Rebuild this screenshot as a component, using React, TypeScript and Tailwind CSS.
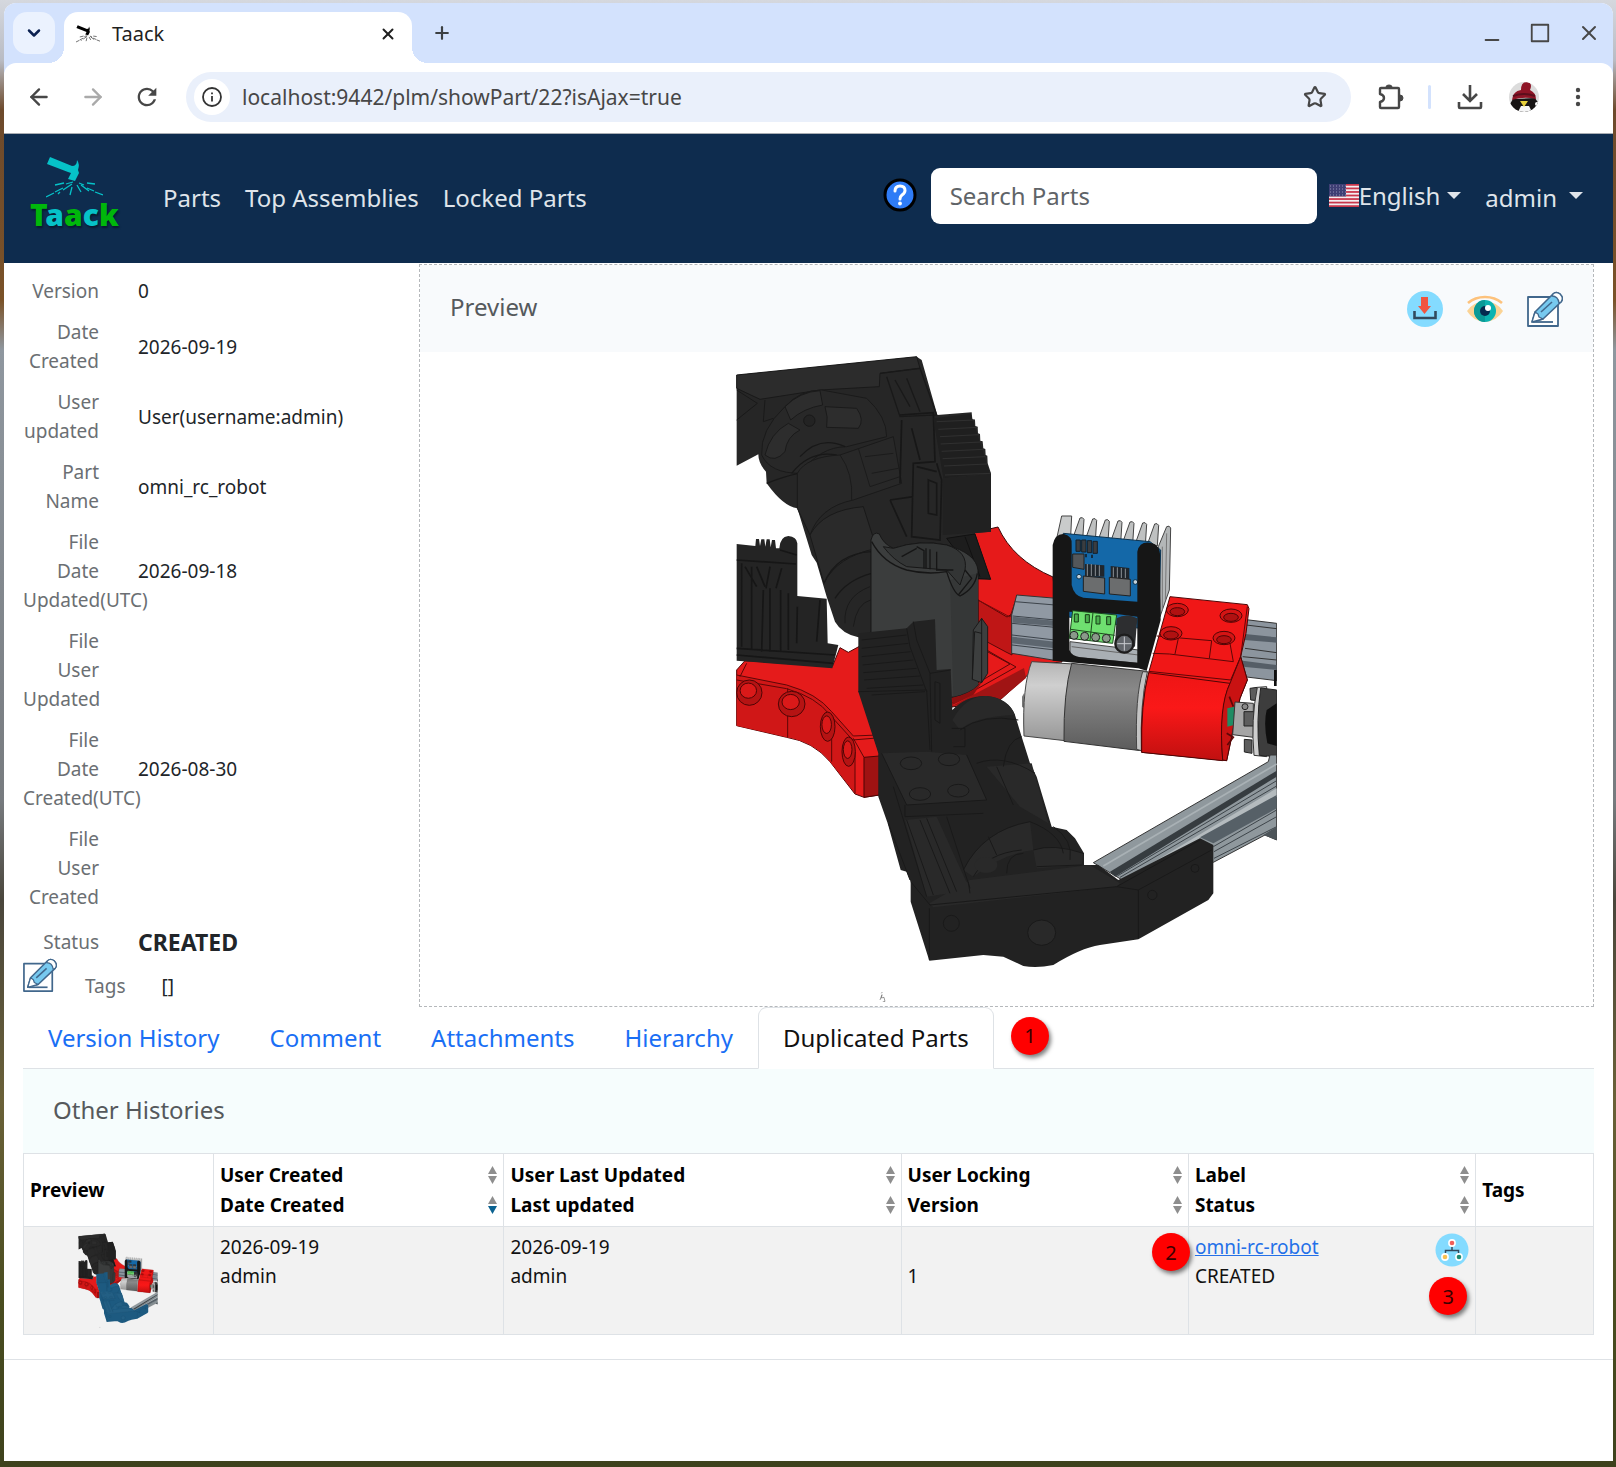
import React from 'react';
import {
  ArrowLeft,
  ArrowRight,
  ChevronDown,
  Minus,
  Plus,
  Square,
  Star,
  X,
} from 'lucide-react';
import { MdRefresh } from 'react-icons/md';

// ─── Data ───────────────────────────────────────────────────────────────────
const NAV_LINKS = ['Parts', 'Top Assemblies', 'Locked Parts'];

const FIELDS = [
  { label: 'Version', value: '0' },
  { label: 'Date Created', value: '2026-09-19' },
  { label: 'User updated', value: 'User(username:admin)' },
  { label: 'Part Name', value: 'omni_rc_robot' },
  { label: 'File Date Updated(UTC)', value: '2026-09-18' },
  { label: 'File User Updated', value: '' },
  { label: 'File Date Created(UTC)', value: '2026-08-30' },
  { label: 'File User Created', value: '' },
];

const TABS = ['Version History', 'Comment', 'Attachments', 'Hierarchy', 'Duplicated Parts'];

const COLUMNS = [
  { lines: ['User Created', 'Date Created'], sorted: 'Date Created' },
  { lines: ['User Last Updated', 'Last updated'] },
  { lines: ['User Locking', 'Version'] },
  { lines: ['Label', 'Status'] },
];

// ─── Icons ──────────────────────────────────────────────────────────────────
function HammerIcon({ color, className }: { color: string; className: string }) {
  return (
    <svg viewBox="0 0 57 42" className={className} aria-hidden="true">
      <path d="M4 0 L26 9 Q31 9 31 3 Q34 7 32 13 L33 16 L29 24 L22 22 L25 16 L22 15 L1 7Z" fill={color} />
      <path
        d="M0 40 L8 36 M9 35 L17 31 M17 33 L26 27 M57 38 L49 35 M48 34 L41 31 M43 34 L35 28 M9 28 L18 26 M20 27 L27 25 M49 27 L41 26 M38 28 L33 26 M24 38 L26 30 M35 35 L31 28 M14 35 L12 37"
        stroke={color}
        strokeWidth="1.300"
        fill="none"
      />
    </svg>
  );
}

function PuzzleIcon() {
  return (
    <svg viewBox="0 0 26 26" className="h-[26px] w-[26px]" fill="none" stroke="#474747" strokeWidth="2.4" strokeLinejoin="round" aria-hidden="true">
      <path d="M3 4 H20 Q21 4 21 5 V23 Q21 24 20 24 H3 Q2 24 2 23 V18 Q6 17 6 14 Q6 11 2 10 V5 Q2 4 3 4Z" />
      <path d="M8 3 Q8 1 11 1 Q14 1 14 3Z M22 11 Q25 11 25 14 Q25 17 22 17Z" fill="#474747" strokeWidth="1" />
    </svg>
  );
}

function TrayIcon() {
  return (
    <svg viewBox="0 0 26 26" className="h-[26px] w-[26px]" fill="none" stroke="#474747" strokeWidth="2.6" aria-hidden="true">
      <path d="M13 1 V17 M6 10 L13 17 L20 10 M2 18 V23 Q2 24 3 24 H23 Q24 24 24 23 V18" />
    </svg>
  );
}

function Avatar() {
  return (
    <svg viewBox="0 0 30 30" className="h-[30px] w-[30px]" aria-hidden="true">
      <clipPath id="avatarClip"><circle cx="15" cy="15" r="15" /></clipPath>
      <g clipPath="url(#avatarClip)">
        <rect width="30" height="30" fill="#dcdcdc" />
        <path d="M4 17 L26 16 L30 22 L25 30 H5 L1 22Z" fill="#171414" />
        <path d="M9 30 L12 24 L20 24 L23 30Z" fill="#f5f5f5" />
        <path d="M11 19 H19 L15 25Z" fill="#e6cf3a" />
        <path d="M3 18 Q4 9 12 8 Q12 0 18 0 Q24 1 21 8 Q27 11 27 17 Q15 14 3 18Z" fill="#8e1426" />
        <path d="M4 14 Q15 10 26 14" stroke="#5b0e1c" strokeWidth="2" fill="none" />
        <circle cx="28" cy="22" r="2" fill="#fff" />
      </g>
    </svg>
  );
}

function HelpIcon() {
  return (
    <svg viewBox="0 0 34 34" className="h-[34px] w-[34px]" aria-hidden="true">
      <circle cx="17" cy="17" r="15" fill="#2f7cf6" stroke="#000" strokeWidth="3" />
      <path d="M12 13 Q12 8 17 8 Q22 8 22 12.500 Q22 15 19 17 Q17 18.500 17 21" fill="none" stroke="#fff" strokeWidth="3" strokeLinecap="round" />
      <circle cx="17" cy="25.500" r="1.900" fill="#fff" />
    </svg>
  );
}

function UsFlag() {
  return (
    <svg viewBox="0 0 30 23" className="h-[23px] w-[30px]" aria-hidden="true">
      <rect width="30" height="23" fill="#f3eef0" />
      {[0, 1, 2, 3, 4, 5, 6].map((i) => (
        <rect key={i} y={i * 3.54} width="30" height="1.770" fill="#c9364b" />
      ))}
      <rect width="17" height="12.400" fill="#3e3f74" />
      {[2, 5, 8, 11].map((y) => (
        <path key={y} d={`M1 ${y} H17`} stroke="#9092b5" strokeWidth="1" strokeDasharray="1 2" />
      ))}
    </svg>
  );
}

function Caret() {
  return (
    <svg viewBox="0 0 14 7" className="h-[7px] w-[14px]" aria-hidden="true">
      <path d="M0 0 H14 L7 7Z" fill="currentColor" />
    </svg>
  );
}

function DownloadBadge() {
  return (
    <svg viewBox="0 0 36 36" className="h-9 w-9" aria-hidden="true">
      <circle cx="18" cy="18" r="18" fill="#84dbff" />
      <path d="M14 6 H21 V15 H24 L17.500 23 L11 15 H14Z" fill="#f1543f" />
      <path d="M7.500 20 V27 H28.500 V20" fill="none" stroke="#324a5e" strokeWidth="2.600" />
    </svg>
  );
}

function EyeIcon() {
  return (
    <svg viewBox="0 0 36 36" className="h-9 w-9" aria-hidden="true">
      <path d="M0 20 Q6 11 18 10 Q30 11 36 20 Q30 30 18 31 Q6 30 0 20Z" fill="#fbd394" />
      <path d="M1 12 Q8 6 18 6 Q28 6 35 12" fill="none" stroke="#fdc27c" strokeWidth="2.600" />
      <circle cx="18" cy="20" r="11" fill="#0bb3b0" />
      <path d="M18 9 A11 11 0 0 0 18 31Z" fill="#0a9996" />
      <circle cx="18" cy="20" r="5" fill="#052b4f" />
      <circle cx="21" cy="17" r="3" fill="#fff" />
    </svg>
  );
}

function EditIcon({ className }: { className: string }) {
  return (
    <svg viewBox="0 0 36 36" className={className} aria-hidden="true" strokeLinejoin="round">
      <rect x="1" y="6" width="30" height="29" fill="#fff" stroke="#41678c" strokeWidth="1.800" />
      <path d="M6 31 H26" stroke="#41678c" strokeWidth="1.800" />
      <path d="M5 31 L8 21 L26 3 Q29 0 33 3 Q37 7 34 11 L16 28Z" fill="#77c9ef" stroke="#41678c" strokeWidth="1.600" />
      <path d="M5 31 L8 21 L11 23 L12 26 L16 28Z" fill="#fff" stroke="#41678c" strokeWidth="1.300" />
      <path d="M26 3 Q29 0 33 3 Q37 7 34 11 L32 12 Q31 5 25 5Z" fill="#fff" stroke="#41678c" strokeWidth="1.300" />
      <path d="M14 21 L25 11" stroke="#41678c" strokeWidth="1.600" />
    </svg>
  );
}

function HierarchyBadge() {
  return (
    <svg viewBox="0 0 34 34" className="h-[34px] w-[34px]" aria-hidden="true">
      <circle cx="17" cy="17" r="16.500" fill="#84dbff" />
      <path d="M17 12 V17 M10.500 20 V17.500 H23.500 V20" fill="none" stroke="#324a5e" strokeWidth="1.500" />
      <circle cx="17" cy="10" r="3.900" fill="#fff" />
      <circle cx="10" cy="24" r="3.900" fill="#fff" />
      <circle cx="24" cy="24" r="3.900" fill="#fff" />
      <circle cx="17" cy="10" r="2.300" fill="#f1605a" />
      <circle cx="10" cy="24" r="2.300" fill="#f9c04f" />
      <circle cx="24" cy="24" r="2.300" fill="#1f8a72" />
    </svg>
  );
}

function SortIcon({ active }: { active?: boolean }) {
  return (
    <svg viewBox="0 0 9 18" className="h-[18px] w-[9px]" aria-hidden="true">
      <path d="M0 8 L4.500 0 L9 8Z" fill="#8e8e8e" />
      <path d="M0 10 H9 L4.500 18Z" fill={active ? '#0b6291' : '#8e8e8e'} />
    </svg>
  );
}

// ─── 3D part preview ────────────────────────────────────────────────────────
function RobotDrawing({ arm, armTop, armLine, className }: { arm: string; armTop: string; armLine: string; className: string }) {
  return (
    <svg viewBox="736 352 541 650" className={className} role="img" aria-label="omni_rc_robot">
      <defs>
        <linearGradient id="motorLight" x1="0" y1="0" x2="0" y2="1">
          <stop offset="0" stopColor="#b4b4b4" />
          <stop offset="0.3" stopColor="#cfcfcf" />
          <stop offset="1" stopColor="#989898" />
        </linearGradient>
        <linearGradient id="motorGray" x1="0" y1="0" x2="0" y2="1">
          <stop offset="0" stopColor="#757575" />
          <stop offset="0.3" stopColor="#888" />
          <stop offset="1" stopColor="#5c5c5c" />
        </linearGradient>
        <linearGradient id="motorRed" x1="0" y1="0" x2="0" y2="1">
          <stop offset="0" stopColor="#ee1515" />
          <stop offset="0.4" stopColor="#fa1818" />
          <stop offset="1" stopColor="#c01010" />
        </linearGradient>
      </defs>
      {/* base plate, right side */}
      <path d="M972 533 L998 527 Q1013 560 1053 577 L1062 662 L1040 664 L1000 700 L952 707 L930 600Z" fill="#e61a1a" stroke="#3a0808" />
      <path d="M978 600 L1007 617 L1012 614 V655 L1006 652 L978 637Z" fill="#bf1616" stroke="#5a0808" />
      <path d="M978 645 L1016 667 L952 703 M988 652 L1010 664 L962 692" fill="none" stroke="#5a0808" />
      <path d="M952 706 L1024 668 L1026 678 L1000 700Z" fill="#a01414" />
      <path d="M978 600 L1010 617 L1017 596" fill="none" stroke="#7a0a0a" />

      <g transform="translate(1000 490) scale(0.33333)" strokeWidth="3">
        {/* aluminium rails */}
        <path d="M50 315 L170 325 V512 L35 490 V375Z" fill="#9099a3" stroke="#333" />
        <path d="M45 335 L165 345 M38 378 L165 390 M36 400 L165 412 M36 435 L165 450 M36 465 L165 480" stroke="#3c434a" fill="none" />
        <path d="M38 380 L165 392 V408 L38 398Z M36 440 L165 455 V475 L36 460Z" fill="#5d666f" />
        <path d="M730 388 L830 400 V572 L715 558Z" fill="#8c959e" stroke="#333" />
        <path d="M735 432 L830 442 V458 L733 450Z M728 512 L830 525 V540 L728 530Z" fill="#555e67" />
        <path d="M738 405 L830 416 M735 475 L830 488 M728 500 L830 510" stroke="#333" />
        {/* heat sink */}
        <path d="M185 78 L215 78 L212 140 L168 155Z" fill="#c9cbcb" stroke="#444" />
        {[240, 278, 316, 354, 390, 428, 464].map((x, i) => (
          <path key={x} d={`M${x - 20} ${140 + i * 3} L${x} ${84 + i * 3} Q${x + 8} ${80 + i * 3} ${x + 12} ${88 + i * 3} L${x + 8} ${150 + i * 3}Z`} fill="#bfc1c1" stroke="#444" />
        ))}
        <path d="M475 170 L500 110 Q508 105 512 114 L508 300 L480 380Z" fill="#b4b7b8" stroke="#444" />
        <path d="M487 170 V360 M500 130 L496 330" stroke="#777" />
        {/* driver board */}
        <path d="M190 130 L450 155 L482 180 L478 330 L450 420 L200 380Z" fill="#1468a8" stroke="#0b3350" />
        <path d="M228 150 h13 v34 h-13Z M245 150 h13 v36 h-13Z M262 152 h13 v36 h-13Z M279 154 h13 v36 h-13Z" fill="#3a3d40" stroke="#14202a" />
        <path d="M238 192 v10 M258 192 v10 M276 194 v10" stroke="#14202a" strokeWidth="5" />
        <path d="M218 192 H252 V238 L218 232Z" fill="#54575a" stroke="#222" />
        <path d="M255 222 L313 226 V260 H255Z M332 228 L388 234 V268 H332Z" fill="#20262c" />
        <path d="M262 222 V258 M274 222 V258 M286 224 V258 M298 226 V258 M340 232 V264 M352 232 V264 M364 234 V264 M376 236 V264" stroke="#8c9297" />
        <path d="M250 258 L314 264 V312 L250 304Z M328 262 L391 268 V318 L328 312Z" fill="#6b6d6e" stroke="#222" />
        <circle cx="237" cy="260" r="7" fill="#c5d2da" stroke="#0b3350" />
        <circle cx="406" cy="276" r="7" fill="#c5d2da" stroke="#0b3350" />
        {/* bracket */}
        <path d="M210 455 L415 480 V520 L210 500Z" fill="#a9afb4" stroke="#444" />
        <path d="M215 470 L415 495" stroke="#666" />
        <path
          fillRule="evenodd"
          d="M158 165 Q165 130 192 132 Q218 138 215 165 V285 Q222 318 250 323 L412 335 V185 Q418 155 448 158 Q482 162 480 200 L482 390 L440 542 L415 535 L158 512Z M208 365 V480 Q215 498 240 502 L412 518 V380 L350 372Z"
          fill="#161616"
        />
        {/* terminal block and capacitor */}
        <path d="M218 362 L350 375 L338 460 L208 445Z" fill="#6fe070" stroke="#1c4a1c" />
        <path d="M223 372 H235 V396 H223Z M256 374 H268 V398 H256Z M288 378 H300 V402 H288Z M320 380 H332 V404 H320Z" fill="#4bb04e" stroke="#173b17" />
        <path d="M212 418 L344 436 M279 368 L270 452" stroke="#1c4a1c" />
        {[222, 254, 287, 319].map((x, i) => (
          <circle key={x} cx={x} cy={436 + i * 3} r="12" fill="#8a9a8a" stroke="#222" />
        ))}
        <path d="M350 385 Q380 368 412 385 L405 470 L345 460Z" fill="#2d2e30" />
        <circle cx="373" cy="461" r="27" fill="#62666b" stroke="#1d1d1d" strokeWidth="7" />
        <path d="M373 440 V482 M352 461 H394" stroke="#c9ccd0" />
        {/* motor */}
        <path d="M72 610 L66 620 V650 L72 655Z" fill="#777" />
        <path d="M95 515 L220 522 L195 752 L72 738 Q66 590 95 515Z" fill="url(#motorLight)" stroke="#444" />
        <path d="M215 520 L442 544 Q420 620 422 782 L192 754 Q190 610 215 520Z" fill="url(#motorGray)" stroke="#333" />
        <path d="M428 545 Q405 620 410 778 L424 782 Q420 640 442 546Z" fill="#c4c4c4" stroke="#444" />
        {/* motor mount */}
        <path d="M510 320 L742 344 L747 356 L738 430 L722 500 L742 570 L720 625 L680 812 L425 787 Q422 640 446 548Z" fill="#f01717" stroke="#4d0505" />
        <path d="M446 548 L690 580 Q658 650 668 812 L425 787 Q422 640 446 548Z" fill="url(#motorRed)" stroke="#4d0505" />
        <path d="M690 580 Q655 650 668 810 L680 812 L705 690 L720 625 L742 570 L722 500Z" fill="#c91212" stroke="#4d0505" />
        <path d="M446 544 L692 570 L722 500 L742 350 M458 490 L508 492 L700 515 M470 438 L635 452 L628 505 M535 445 L525 492 M690 460 L700 515" fill="none" stroke="#5c0707" />
        {[[532, 360], [693, 377], [513, 430], [672, 444]].map(([x, y]) => (
          <g key={`${x}-${y}`}>
            <ellipse cx={x} cy={y} rx="33" ry="20" fill="#d41414" stroke="#4d0505" />
            <ellipse cx={x} cy={y + 5} rx="22" ry="12" fill="#b01111" stroke="#4d0505" />
          </g>
        ))}
        {/* shaft coupling */}
        <path d="M682 655 L702 650 V705 L682 710Z" fill="#1f8c63" />
        <path d="M688 620 L700 650 M680 730 L700 742 L682 765" stroke="#5c0707" strokeWidth="5" fill="none" />
        <path d="M705 636 L760 640 V742 L698 734Z" fill="#a5a5a5" stroke="#333" />
        <circle cx="735" cy="650" r="9" fill="#8a8a8a" stroke="#222" />
        <path d="M732 665 H762 V708 H732Z M750 595 L772 592 V632 L752 630Z M733 748 L756 750 V790 L733 786Z" fill="#5d5d5d" stroke="#222" />
        <path d="M772 592 L800 590 V800 L762 796 Q752 690 772 592Z" fill="#cfcfcf" stroke="#333" />
        <path d="M782 594 L830 600 V800 L778 796 Q768 690 782 594Z" fill="#3d3d3d" stroke="#222" />
        <path d="M830 640 L800 660 Q790 700 802 760 L830 768Z M822 540 H830 V588 H822Z" fill="#0f0f0f" />
      </g>

      {/* lower right rails */}
      <g transform="translate(880 680) scale(0.33333)" strokeWidth="3">
        <path d="M640 548 L1165 245 L1170 225 L1190 225 V480 L1155 465 L1000 547 L940 580 L730 602Z" fill="#8f989d" stroke="#333" />
        <path d="M690 575 L1190 272 V290 L705 590Z" fill="#363c40" />
        <path d="M670 558 L1190 252" stroke="#a9b1b5" strokeWidth="5" />
        <path d="M735 598 L1190 325 V350 L960 475 L800 570Z" fill="#b4bbbe" />
        <path d="M960 472 L1190 345 V385 L1000 490Z" fill="#566067" />
        <path d="M1000 500 L1190 390 M1002 515 L1190 410 M1002 535 L1190 440 M720 592 L1190 318 M712 588 L1190 302" stroke="#3d4449" />
        <path d="M1150 465 L1190 440 V480Z" fill="#4c5459" />
      </g>

      {/* base plate, left side */}
      <g transform="translate(720 620) scale(0.33333)" strokeWidth="3">
        <path d="M50 150 L75 122 L337 140 L360 83 L385 97 L420 78 V215 L478 400 V525 L432 532 L405 522 L330 425 Q280 365 200 352 L50 317Z" fill="#e51b1b" stroke="#4d0505" />
        <path d="M50 165 L200 195 Q290 220 335 275 L400 350 L407 522 L330 425 Q280 365 200 352 L50 317Z" fill="#d01717" />
        <path d="M432 412 L478 408 V525 L432 532Z" fill="#9f1212" stroke="#4d0505" />
        <path d="M50 165 L200 195 Q290 220 335 275 L400 348 L475 345 M60 170 L80 130 M50 180 L200 206 Q290 232 330 285 L398 360 L470 354 M203 205 V352 M335 285 V425 M400 355 L432 412 M405 395 V520" fill="none" stroke="#5c0707" />
        {[[88, 218, 38, 38], [215, 252, 40, 38], [323, 320, 22, 44], [386, 395, 20, 44]].map(([x, y, rx, ry]) => (
          <g key={x}>
            <ellipse cx={x} cy={y} rx={rx} ry={ry} fill="#b51313" stroke="#4d0505" />
            <ellipse cx={x - 3} cy={y - 6} rx={rx * 0.65} ry={ry * 0.6} fill="#da1919" stroke="#4d0505" />
          </g>
        ))}
        <path d="M695 215 Q760 210 790 180 L760 225 L697 255Z" fill="#8c1010" />
      </g>

      {/* upper arm, left block and centre column */}
      <g transform="translate(720 340) scale(0.33333)" strokeWidth="3">
        <path d="M50 612 L106 618 L108 597 H117 L120 618 L124 598 H133 L136 620 L140 598 H149 L152 622 L156 600 H165 L168 625 L178 625 Q180 590 205 588 Q230 590 232 610 V768 L320 776 L323 910 L355 915 L337 985 L50 962Z" fill="#242424" />
        <path d="M65 670 V920 M95 680 V930 M130 750 L125 935 M150 745 V935 M182 750 V935 M205 760 V930 M50 660 L228 672 M75 680 L110 740 M110 680 L135 740 M150 680 L138 745 M185 685 L168 745 M232 800 L230 910 M300 780 L290 905 M50 925 L345 945 M50 945 L340 970 M180 630 L230 645" fill="none" stroke="#161616" strokeWidth="5" />

        <path d="M50 105 L590 50 L605 60 L652 225 L755 217 L757 238 L765 240 L766 258 L773 260 L774 280 L780 282 L781 302 L788 304 L790 325 L796 327 L797 345 L802 347 L803 370 L813 400 V575 L765 580 L812 718 L700 720 L455 900 L415 892 Q365 880 345 845 L320 770 L290 668 L275 645 L232 505 Q190 500 140 430 L138 395 Q115 370 115 343 L50 377Z" fill="#262626" />
        <path d="M50 105 L590 50 L600 85 L480 100 L478 140 L300 150 L120 178 L50 145Z" fill="#2c2c2c" stroke="#191919" />
        <path d="M480 100 L600 85 L650 225 L540 230 L500 110 M525 120 L570 200 M560 115 L600 215" fill="none" stroke="#191919" strokeWidth="4" />
        <path d="M135 180 L130 245 L160 235 M50 150 L112 190 L50 240" fill="none" stroke="#191919" />
        <path d="M195 200 Q240 150 305 150 L440 175 Q500 230 500 290 L380 320 Q300 320 240 400 Q150 400 125 345 Q120 270 195 200Z" fill="#282828" stroke="#1a1a1a" />
        <path d="M195 200 Q240 155 300 152 L308 195 Q250 205 212 240Z M315 200 L410 205 Q435 240 415 265 L320 262 Q325 230 315 200Z M205 250 Q150 280 135 345 Q165 370 195 335 Q200 290 240 270Z" fill="#2d2d2d" stroke="#1a1a1a" />
        <path d="M240 350 Q300 285 375 320 M215 400 Q270 330 350 345 M140 430 Q190 410 235 400" fill="none" stroke="#181818" strokeWidth="4" />
        <circle cx="268" cy="242" r="17" fill="#232323" stroke="#181818" />
        <path d="M232 400 Q260 350 360 345 L520 290 L545 430 L400 480 Q300 500 270 585 L232 505Z" fill="#282828" stroke="#1a1a1a" />
        <path d="M360 345 Q400 400 395 480 M415 325 L450 440 L540 410 M435 350 L520 340 M455 400 L535 385" fill="none" stroke="#1b1b1b" />
        <path d="M270 585 Q310 510 430 500 L470 625 Q350 650 312 730Z" fill="#2a2a2a" stroke="#191919" />
        <path d="M312 730 Q350 640 455 635 V700 Q380 720 345 775" fill="none" stroke="#181818" strokeWidth="4" />
        <path d="M375 850 Q370 770 450 740 M400 860 Q410 790 452 780" fill="none" stroke="#1a1a1a" />
        <path d="M540 225 L640 218 L645 365 L580 370 L575 590 L660 600 L665 420 L650 370 M545 240 L540 430 M575 265 L600 360 M590 380 L650 395 M625 420 V520 L650 525 V430Z M510 480 L580 470 M510 480 L560 590" fill="none" stroke="#171717" strokeWidth="5" />
        <path d="M640 235 L752 222 L800 370 L810 400 L670 415Z" fill="#1f1f1f" />
        <path d="M650 245 L765 240 M655 268 L772 262 M660 290 L778 284 M662 312 L784 306 M665 334 L790 328 M668 356 L796 350 M672 378 L802 372 M675 405 L813 400" stroke="#303030" />
        <path d="M668 415 L813 402 V575 L668 585Z" fill="#212121" />
        <path d="M680 595 L765 582 L812 718 L770 715Z M735 590 L780 710" fill="#1d1d1d" stroke="#111" />

        {/* centre column */}
        <path d="M453 600 Q460 572 478 582 Q490 612 520 625 Q600 598 680 615 Q768 640 774 690 V1035 Q750 1060 695 1072 L560 1050 L453 900Z" fill="#3b3d3d" stroke="#171717" />
        <path d="M690 720 L774 700 V1035 Q750 1060 700 1070Z" fill="#353737" />
        <path d="M520 625 Q600 598 680 615 Q745 635 735 690 L720 735 L680 690 L560 680 Q520 660 490 620Z" fill="#333535" stroke="#171717" />
        <path d="M455 605 Q490 670 560 690 Q620 705 680 695 Q700 760 720 768 Q765 745 772 700 M590 620 L612 632 V685 M618 625 V685 M630 628 V688 M545 650 L590 625 M650 635 V690 L700 690 M735 690 L755 715 L715 765" fill="none" stroke="#161616" strokeWidth="4" />
        <path d="M760 870 L785 835 L803 860 V1000 L785 1028 L757 1018Z" fill="#3d3f3f" stroke="#1a1a1a" />
        <path d="M785 835 V1028 M757 1018 L764 875 L785 880" fill="none" stroke="#1a1a1a" />
      </g>

      {/* lower arm */}
      <g transform="translate(720 620) scale(0.33333)" strokeWidth="3">
        <path
          d="M415 40 L560 25 L580 5 L645 -2 L650 150 L692 147 L697 270 Q740 225 800 228 Q865 235 885 285 L905 350 L930 430 L950 470 L995 620 L1040 630 L1065 655 L1092 700 V735 L1135 735 L1195 780 L1440 655 L1480 675 V820 L1465 840 L1255 958 L1140 975 Q1080 985 1000 1035 Q950 1046 910 1038 L850 1010 L790 1005 L628 1022 L572 845 V785 L560 755 L542 750 L503 610 L475 530 V400 L415 215Z"
          fill={arm}
        />
        <path d="M628 850 L750 780 L1110 735 L1200 790 L1190 800 L640 862Z M485 400 L620 395 L740 405 L800 540 L560 555Z M555 600 L650 590 L750 810 L620 830Z" fill={armTop} />
        <path d="M697 300 Q740 225 800 228 Q865 235 885 285 Q760 290 720 330Z M800 440 L935 430 L985 610 L900 560Z" fill={armTop} />
        <path d="M730 750 Q790 630 930 605 L940 690 Q850 700 760 770Z M940 690 Q1000 670 1090 700 L1085 735 L950 745Z" fill={armTop} />
        <g fill="none" stroke={armLine} strokeWidth="3">
          <path d="M425 60 L560 45 M425 85 L565 70 M425 110 L572 95 M428 135 L580 120 M430 158 L590 145 M432 180 L600 168 M440 205 L610 195 M455 225 L615 215 M415 215 L620 210 L630 390" />
          <path d="M560 25 L570 80 L620 215 M580 5 L590 60 L630 160 L692 150 M630 160 L635 395 M645 185 V300 L660 310 V190Z M695 325 H735 V380 H700" />
          <path d="M720 330 Q790 280 895 300 M770 430 Q850 400 945 460 M830 440 L880 555 M905 350 Q860 360 850 440 M485 400 L560 555 L800 540 L740 405 M555 555 V590 L790 580" />
          <path d="M520 500 L620 830 M560 600 L640 825 M600 600 L690 820 M620 595 L710 815 M680 590 L750 805 M505 610 L570 780" />
          <path d="M730 750 Q790 630 930 605 M760 770 Q800 700 905 690 M805 650 L830 705 M860 760 Q860 700 910 700 M930 605 Q1020 640 1030 700 M940 690 Q1000 670 1090 700 M950 740 L1085 735 M1000 620 Q1060 660 1050 720" />
          <path d="M628 865 V1020 M572 785 L630 855 L1190 800 L1255 810 V955 M1190 800 L1440 660 M1255 810 L1475 690 M745 785 L750 820" />
          <ellipse cx="573" cy="430" rx="32" ry="19" />
          <ellipse cx="687" cy="418" rx="32" ry="19" />
          <ellipse cx="600" cy="522" rx="32" ry="19" />
          <ellipse cx="715" cy="512" rx="32" ry="19" />
          <circle cx="694" cy="910" r="24" />
          <circle cx="1297" cy="825" r="14" />
          <circle cx="1425" cy="745" r="12" />
        </g>
        <ellipse cx="965" cy="938" rx="42" ry="38" fill={armTop} stroke={armLine} />
        <ellipse cx="798" cy="735" rx="34" ry="24" fill={armTop} />
        <path d="M480 1140 L486 1124 L484 1134 L492 1132 L495 1144 L488 1146 M484 1120 L487 1116" fill="none" stroke="#666" strokeWidth="2" />
      </g>
    </svg>
  );
}

// Numbered callout pinned over the page
function Marker({ n, className }: { n: number; className: string }) {
  return (
    <span className={`absolute flex h-[38px] w-[38px] items-center justify-center rounded-full bg-[#ff0000] text-[20px] text-[#3a0000] shadow-[2px_3px_4px_rgba(0,0,0,0.5)] ${className}`}>
      {n}
    </span>
  );
}

// ─── Browser chrome ─────────────────────────────────────────────────────────
function TabStrip() {
  return (
    <div className="flex h-[60px] items-end bg-[#d3e2fd] pl-[9px] text-[#1f1f1f]">
      <button aria-label="Search tabs" className="mb-[9px] flex h-[42px] w-[42px] items-center justify-center rounded-[14px] bg-[#ebf2fe]">
        <ChevronDown size={20} strokeWidth={3} className="text-[#0b2150]" />
      </button>
      <div className="relative ml-[9px] flex h-[51px] w-[348px] items-center rounded-t-[14px] bg-white pl-3 pr-[15px] pb-2">
        <span className="absolute -left-4 bottom-0 h-4 w-4 bg-[radial-gradient(circle_at_0_0,transparent_16px,white_16px)]" />
        <span className="absolute -right-4 bottom-0 h-4 w-4 bg-[radial-gradient(circle_at_100%_0,transparent_16px,white_16px)]" />
        <HammerIcon color="#000" className="h-[20px] w-[24px]" />
        <span className="ml-3 flex-1 text-[20px] leading-6">Taack</span>
        <button aria-label="Close tab"><X size={18} strokeWidth={2.6} /></button>
      </div>
      <button aria-label="New tab" className="mb-5 ml-5 text-[#3c4043]"><Plus size={20} strokeWidth={2.6} /></button>
      <div className="mb-[18px] ml-auto flex items-center gap-[26px] pr-3 text-[#474747]">
        <button aria-label="Minimize" className="h-6 pt-2"><Minus size={22} strokeWidth={2} /></button>
        <button aria-label="Maximize"><Square size={22} strokeWidth={2} className="[&_rect]:[rx:0]" /></button>
        <button aria-label="Close window"><X size={24} strokeWidth={2} /></button>
      </div>
    </div>
  );
}

function Toolbar() {
  return (
    <div className="bg-[#d3e2fd]">
      <div className="flex h-[71px] items-center rounded-t-[12px] border-b border-[#a9adb3] bg-white pb-[3px] pl-[22px] pr-[28px] text-[#474747]">
        <button aria-label="Back"><ArrowLeft size={26} strokeWidth={2.2} /></button>
        <button aria-label="Forward" className="ml-7 text-[#aaa]"><ArrowRight size={26} strokeWidth={2.2} /></button>
        <button aria-label="Reload" className="ml-[27px]"><MdRefresh size={28} /></button>
        <div className="ml-[25px] flex h-[50px] flex-1 items-center rounded-full bg-[#eaf0fb] pl-2 pr-6">
          <button aria-label="Site information" className="flex h-9 w-9 items-center justify-center rounded-full bg-white">
            <svg viewBox="0 0 20 20" className="h-5 w-5" fill="none" stroke="#333" strokeWidth="1.800" aria-hidden="true">
              <circle cx="10" cy="10" r="9" />
              <path d="M10 9 V14.500 M10 5.500 V7.300" />
            </svg>
          </button>
          <input
            aria-label="Address"
            defaultValue="localhost:9442/plm/showPart/22?isAjax=true"
            className="ml-3 min-w-0 flex-1 bg-transparent text-[21px] leading-8 text-[#474747] outline-none"
          />
          <button aria-label="Bookmark"><Star size={24} strokeWidth={2.2} /></button>
        </div>
        <button aria-label="Extensions" className="ml-[27px]"><PuzzleIcon /></button>
        <span className="ml-6 h-6 w-[3px] rounded bg-[#d3e2fd]" />
        <button aria-label="Downloads" className="ml-[26px]"><TrayIcon /></button>
        <button aria-label="Profile" className="ml-[26px]"><Avatar /></button>
        <button aria-label="Menu" className="ml-8">
          <svg viewBox="0 0 14 20" className="h-5 w-[14px]" fill="#474747" aria-hidden="true">
            <circle cx="7" cy="3" r="2.200" /><circle cx="7" cy="10" r="2.200" /><circle cx="7" cy="17" r="2.200" />
          </svg>
        </button>
      </div>
    </div>
  );
}

// ─── Application ────────────────────────────────────────────────────────────
function Navbar() {
  return (
    <nav className="flex h-[129px] items-center bg-[#0e2c4e] pb-[2px] pl-[26px] pr-[30px] text-[24px] leading-9 text-[#dfe4ea]">
      <a href="#home" className="mb-2 flex w-[92px] flex-col">
        <HammerIcon color="#06c2c8" className="ml-4 h-[42px] w-[57px]" />
        <span className="text-[30px] font-black leading-8 text-[#00b70b] [text-shadow:1px_2px_2px_rgba(0,0,0,0.4)]">
          T<span className="text-[#06c2c8]">a</span>a<span className="text-[#06c2c8]">c</span>k
        </span>
      </a>
      <div className="ml-[41px] flex gap-6">
        {NAV_LINKS.map((link) => (
          <a key={link} href="#nav">{link}</a>
        ))}
      </div>
      <div className="ml-auto flex items-center">
        <button aria-label="Help" className="mb-1.5"><HelpIcon /></button>
        <input
          type="search"
          aria-label="Search Parts"
          placeholder="Search Parts"
          className="ml-[14px] mb-1 h-[56px] w-[386px] rounded-[9px] bg-white px-[19px] text-[24px] placeholder:text-[#5f6468]"
        />
        <button className="ml-3 mb-1 flex items-center">
          <UsFlag />
          English
          <span className="ml-[7px]"><Caret /></span>
        </button>
        <button className="ml-6 flex items-center">
          admin
          <span className="ml-3 mb-1"><Caret /></span>
        </button>
      </div>
    </nav>
  );
}

function PartFields() {
  return (
    <dl className="w-[396px] shrink-0 pt-[7px] text-[19px] leading-[29px] text-[#212529]">
      {FIELDS.map(({ label, value }) => (
        <div key={label} className="flex items-center py-[6px]">
          <dt className="w-[76px] shrink-0 text-right text-[#6b6f73]">{label}</dt>
          <dd className="ml-[39px]">{value}</dd>
        </div>
      ))}
      <div className="flex items-center py-[6px]">
        <dt className="w-[76px] shrink-0 text-right text-[#6b6f73]">Status</dt>
        <dd className="ml-[39px] text-[23px] font-bold leading-9">CREATED</dd>
      </div>
      <div className="flex">
        <dt className="flex text-[#6b6f73]">
          <button aria-label="Edit tags" className="-mt-2 h-[34px]"><EditIcon className="h-[34px] w-[34px]" /></button>
          <span className="ml-7 py-[6px]">Tags</span>
        </dt>
        <dd className="ml-9 py-[6px]">[]</dd>
      </div>
    </dl>
  );
}

function PreviewPanel() {
  return (
    <section className="flex flex-1 flex-col border border-dashed border-[#b5b8bb]">
      <header className="flex h-[87px] items-center bg-[#f8fafc] px-[30px]">
        <h2 className="pb-1 text-[24px] leading-9 text-[#55595c]">Preview</h2>
        <div className="ml-auto flex gap-6">
          <button aria-label="Download"><DownloadBadge /></button>
          <button aria-label="View"><EyeIcon /></button>
          <button aria-label="Edit"><EditIcon className="h-9 w-9" /></button>
        </div>
      </header>
      <div className="flex justify-center">
        <RobotDrawing arm="#222222" armTop="#292929" armLine="#191919" className="h-[650px] w-[541px]" />
      </div>
    </section>
  );
}

function HistoryTable() {
  return (
    <table className="w-full table-fixed border-collapse text-[19px] leading-[29px] text-[#111] [&_td]:border [&_td]:border-[#dee2e6] [&_td]:p-[6px] [&_th]:border [&_th]:border-[#dee2e6] [&_th]:p-[6px]">
      <colgroup>
        <col className="w-[12.1%]" />
        <col className="w-[18.5%]" />
        <col className="w-[25.3%]" />
        <col className="w-[18.3%]" />
        <col className="w-[18.3%]" />
        <col />
      </colgroup>
      <thead>
        <tr className="text-left leading-[30px] text-black">
          <th>Preview</th>
          {COLUMNS.map(({ lines, sorted }) => (
            <th key={lines[0]}>
              {lines.map((line) => (
                <button key={line} className="flex w-full items-center justify-between font-bold">
                  {line}
                  <SortIcon active={line === sorted} />
                </button>
              ))}
            </th>
          ))}
          <th>Tags</th>
        </tr>
      </thead>
      <tbody>
        <tr className="bg-[#f2f2f2] align-top">
          <td>
            <RobotDrawing arm="#1d5a80" armTop="#235f84" armLine="#123f5c" className="mx-auto h-[95px] w-[80px]" />
          </td>
          <td>2026-09-19<br />admin</td>
          <td>2026-09-19<br />admin</td>
          <td className="relative">
            <br />1
            <Marker n={2} className="-right-[2px] top-1.5" />
          </td>
          <td className="relative">
            <div className="flex justify-between">
              <div>
                <a href="#part" className="text-[#2470e8] underline">omni-rc-robot</a>
                <br />
                CREATED
              </div>
              <button aria-label="Show hierarchy" className="h-[34px]"><HierarchyBadge /></button>
            </div>
            <Marker n={3} className="right-2 top-[50px]" />
          </td>
          <td />
        </tr>
      </tbody>
    </table>
  );
}

export default function App() {
  return (
    <div className="flex min-h-screen flex-col bg-[linear-gradient(180deg,#d5d8de_0,#b9bcc4_60px,#6d4a2c_110px,#7a5228_300px,#8f979f_350px,#777b7f_800px,#4a463c_900px,#6a6138_1100px,#4a4d20_1300px,#3e421d_100%)] pt-[3px] pr-[3px] pb-[6px] pl-1 font-['Noto_Sans','Open_Sans',sans-serif]">
      <div className="flex flex-1 flex-col overflow-hidden rounded-t-[12px] bg-white">
        <TabStrip />
        <Toolbar />
        <Navbar />
        <main className="border-b border-[#dee2e6] pt-px pr-[19px] pb-6 pl-[19px]">
          <div className="flex">
            <PartFields />
            <PreviewPanel />
          </div>
          <div className="relative">
            <div role="tablist" className="flex border-b border-[#dee2e6] text-[24px] leading-9">
              {TABS.map((tab) => (
                <button
                  key={tab}
                  role="tab"
                  aria-selected={tab === 'Duplicated Parts'}
                  className="-mb-px rounded-t-[9px] border border-transparent px-6 py-3 text-[#1a6ff5] aria-selected:border-[#dee2e6] aria-selected:border-b-white aria-selected:bg-white aria-selected:text-[#111]"
                >
                  {tab}
                </button>
              ))}
            </div>
            <Marker n={1} className="left-[988px] top-[10px]" />
          </div>
          <h2 className="bg-[#f6fdfd] px-[30px] pt-[23px] pb-[25px] text-[24px] leading-9 text-[#55595c]">Other Histories</h2>
          <HistoryTable />
        </main>
      </div>
    </div>
  );
}
